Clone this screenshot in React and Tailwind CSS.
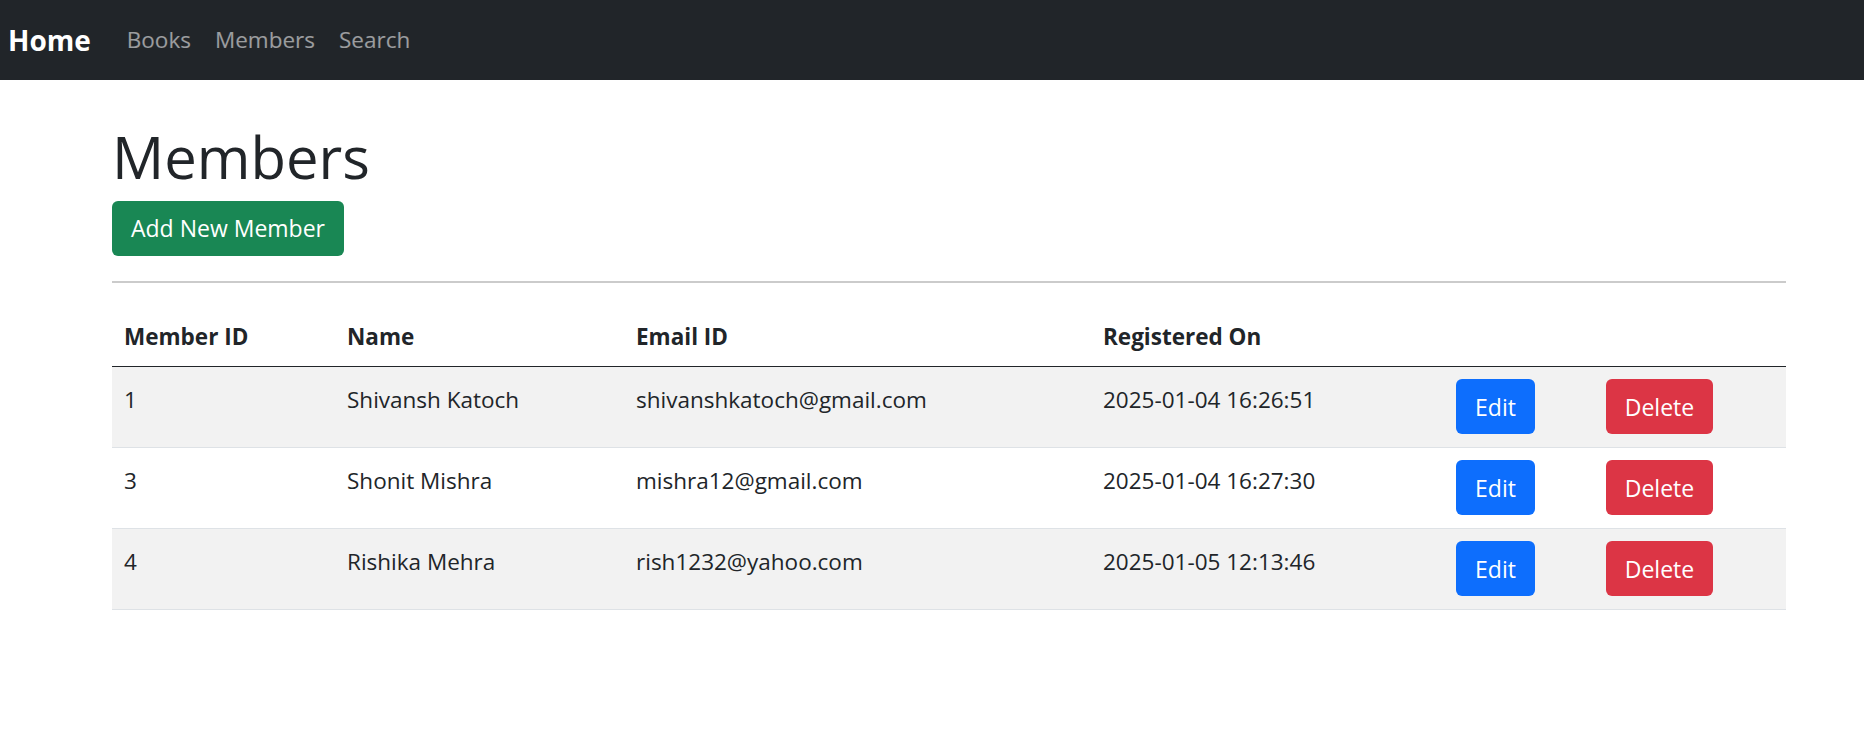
const members = [
  { id: 1, name: "Shivansh Katoch", email: "shivanshkatoch@gmail.com", registered: "2025-01-04 16:26:51" },
  { id: 3, name: "Shonit Mishra", email: "mishra12@gmail.com", registered: "2025-01-04 16:27:30" },
  { id: 4, name: "Rishika Mehra", email: "rish1232@yahoo.com", registered: "2025-01-05 12:13:46" },
];

function Navbar() {
  return (
    <nav className="flex h-[80px] items-center bg-[#212529] pl-2">
      <a href="#" className="mr-6 text-[28px] font-bold leading-none text-white">
        Home
      </a>
      <div className="flex items-center text-[22.5px] text-white/55">
        <a href="#" className="px-3">Books</a>
        <a href="#" className="px-3">Members</a>
        <a href="#" className="px-3">Search</a>
      </div>
    </nav>
  );
}

export default function App() {
  return (
    <div className="min-h-screen bg-white font-['Open_Sans',sans-serif] text-[#212529]">
      <Navbar />
      <main className="ml-[112px] w-[1674px]">
        <h1 className="mt-[41px] text-[58px] font-medium leading-[72px]">Members</h1>
        <button className="mt-[8px] flex h-[55px] w-[232px] items-center justify-center rounded-md bg-[#198754] text-[23px] text-white">
          Add New Member
        </button>
        <hr className="mt-[25px] h-[2px] border-0 bg-[#cbcbcb]" />

        <div className="mt-[24px] text-[22.5px]">
          {/* header */}
          <div className="flex h-[60px] items-center border-b border-[#212529] font-bold">
            <div className="w-[223px] px-3">Member ID</div>
            <div className="w-[289px] px-3">Name</div>
            <div className="w-[467px] px-3">Email ID</div>
            <div className="w-[353px] px-3">Registered On</div>
            <div className="w-[150px] px-3"></div>
            <div className="flex-1 px-3"></div>
          </div>
          {members.map((m, i) => (
            <div
              key={m.id}
              className={`flex h-[81px] border-b border-[#dee2e6] leading-[42px] ${
                i % 2 === 0 ? "bg-[#f2f2f2]" : "bg-white"
              }`}
            >
              <div className="w-[223px] px-3 pt-3">{m.id}</div>
              <div className="w-[289px] px-3 pt-3">{m.name}</div>
              <div className="w-[467px] px-3 pt-3">{m.email}</div>
              <div className="w-[353px] px-3 pt-3">{m.registered}</div>
              <div className="w-[150px] px-3 pt-3">
                <button className="flex h-[55px] w-[79px] items-center justify-center rounded-md bg-[#0d6efd] text-[23px] text-white">
                  Edit
                </button>
              </div>
              <div className="flex-1 px-3 pt-3">
                <button className="flex h-[55px] w-[107px] items-center justify-center rounded-md bg-[#dc3545] text-[23px] text-white">
                  Delete
                </button>
              </div>
            </div>
          ))}
        </div>
      </main>
    </div>
  );
}
